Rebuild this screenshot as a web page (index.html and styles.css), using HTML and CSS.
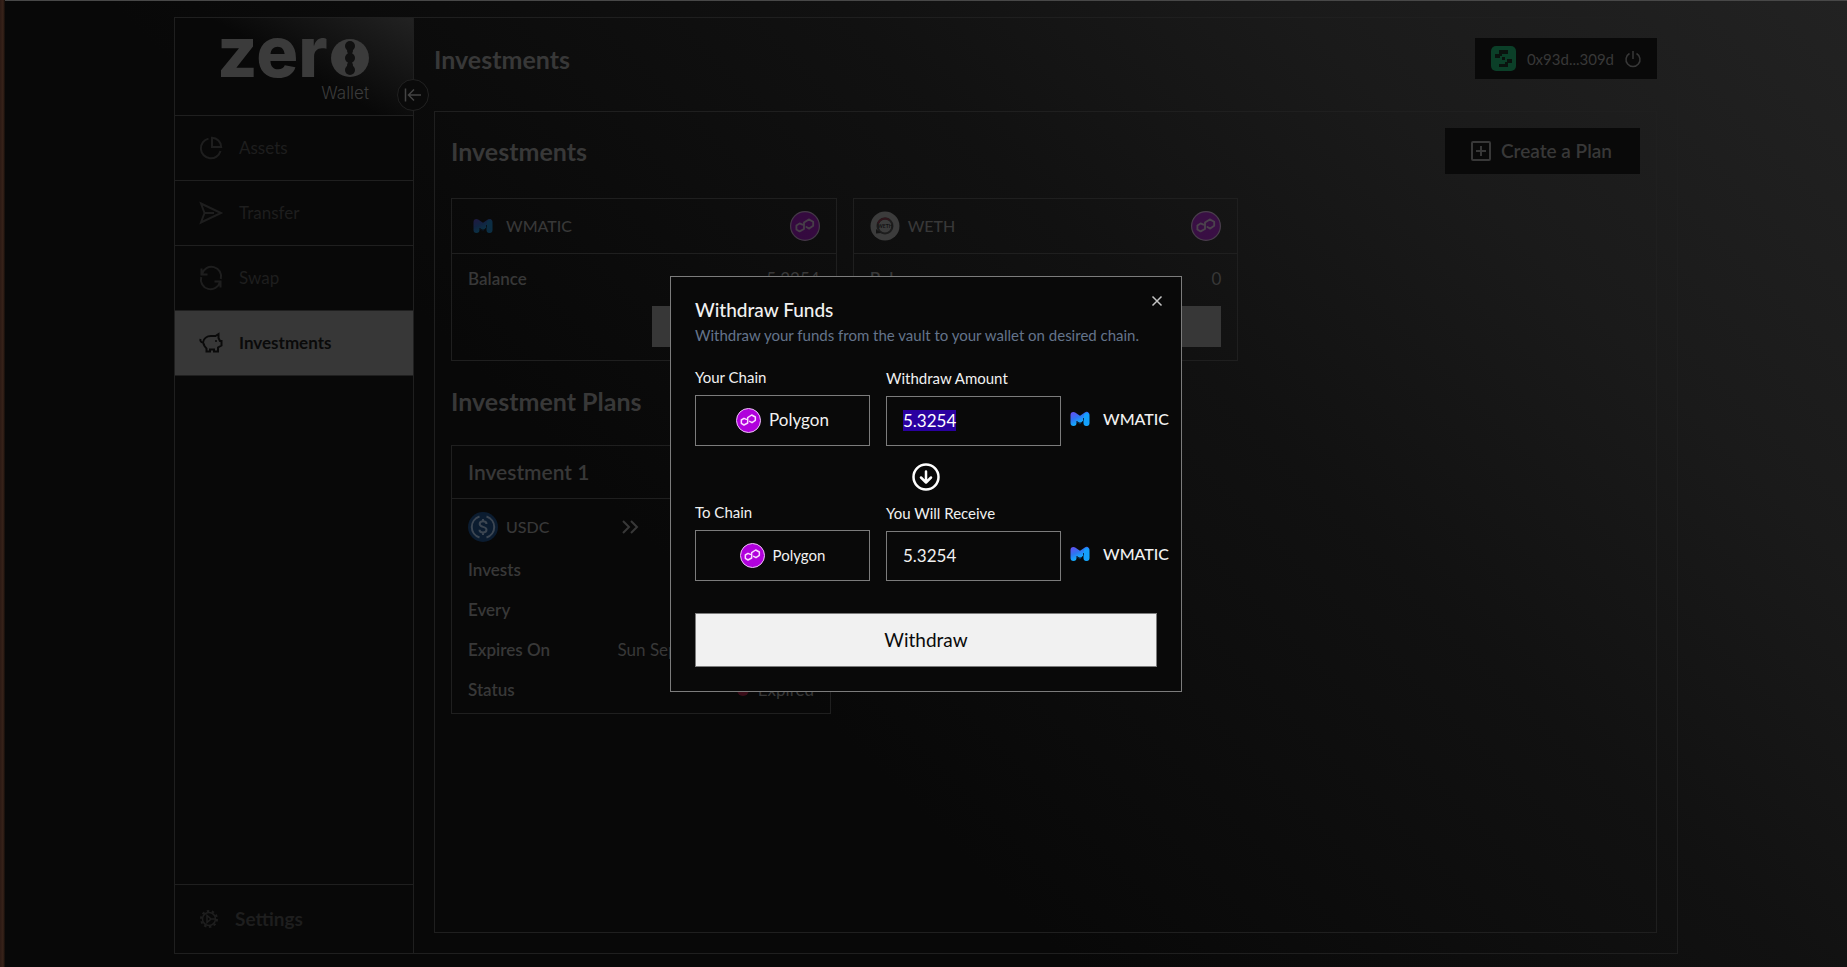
FILE: index.html
```html
<!DOCTYPE html>
<html lang="en">
<head>
<meta charset="utf-8">
<title>Zero Wallet – Investments</title>
<link rel="stylesheet" href="styles.css">
</head>
<body>
<svg class="defs" aria-hidden="true">
  <defs>
    <linearGradient id="matic-fill" gradientUnits="userSpaceOnUse" x1="8" y1="7" x2="15" y2="22">
      <stop offset="0" stop-color="#6a4cf0"/>
      <stop offset="0.45" stop-color="#2f74f2"/>
      <stop offset="0.8" stop-color="#14a9fb"/>
    </linearGradient>
    <symbol id="polygon" viewBox="0 0 75 75">
      <circle cx="37.5" cy="37.5" r="36" fill="#b000dc" stroke="#eec4f8" stroke-width="3"/>
      <path d="M31 34 24 31 16 36V46L24 51 35 45V29L47 21 58 27V37L48 44 41 40" fill="none" stroke="#fbd9ff" stroke-width="4.500" stroke-linejoin="round" stroke-linecap="round"/>
    </symbol>
    <symbol id="matic" viewBox="0 0 30 30">
      <path d="M8.500 19V11L15 15.500 21.500 11V19" fill="none" stroke="url(#matic-fill)" stroke-width="6" stroke-linejoin="round" stroke-linecap="round"/>
      <path d="M21.500 19V11.500" fill="none" stroke="#14a0fb" stroke-width="5" stroke-linecap="round"/>
      <path d="M12 18 15 20 18.500 16.500V14" fill="none" stroke="#0a2a50" stroke-width="1"/>
    </symbol>
  </defs>
</svg>
<div class="edge"></div>
<div class="page">
  <div class="app">
    <aside class="sidebar">
      <div class="brand">
        <svg class="brand-logo" viewBox="0 0 152 66" role="img" aria-label="Zero Wallet">
          <text class="brand-word" x="-1" y="41">zer</text>
          <circle cx="132" cy="22" r="19" fill="#3b3b3b"/>
          <g fill="#101010">
            <circle cx="132" cy="10" r="5"/><circle cx="132" cy="22" r="5"/><circle cx="132" cy="34" r="5"/>
            <path d="M130 10h4l1 5-1 3 2 4-2 4 1 3-1 5h-4l-1-5 1-3-2-4 2-4-1-3z"/>
          </g>
          <text class="brand-sub" x="151" y="63" text-anchor="end">Wallet</text>
        </svg>
        <button class="collapse" aria-label="Collapse sidebar">
          <svg viewBox="0 0 18 18" width="18" height="18"><path d="M1.500 2.500v13M17 9H5M10 3.500 4.500 9l5.500 5.500" class="line"/></svg>
        </button>
      </div>
      <nav class="nav">
        <a href="#assets"><svg viewBox="0 0 24 24"><path class="line" d="M9.500 2.600A10 10 0 1 0 21.500 15M13 1.800V11h9.200A9.500 9.500 0 0 0 13 1.800z"/></svg>Assets</a>
        <a href="#transfer"><svg viewBox="0 0 24 24"><path class="line" d="M2 2.500 22 12 2 21.500 5.500 12zM5.500 12H15"/></svg>Transfer</a>
        <a href="#swap"><svg viewBox="0 0 24 24"><path class="line" d="M2.500 2.500v6h6M3 8A9.700 9.700 0 0 1 21.800 13M21.500 21.500v-6h-6M21 16A9.700 9.700 0 0 1 2.200 11"/></svg>Swap</a>
        <a href="#investments" class="active"><svg viewBox="0 0 24 24"><path class="line" d="M1.500 8c-.5 2 .5 3.500 2.500 3.500C4.500 7.500 8 5 12 5h4.500L19.500 3v4l1.500 3h1.500v4.500L19 16.500V20.500h-4V18.500h-4v2H7.500V17.500L5.500 15 4 11.500"/><circle cx="17" cy="10" r="1" fill="currentColor"/></svg>Investments</a>
      </nav>
      <a href="#settings" class="settings">
        <svg viewBox="0 0 20 20"><circle cx="10" cy="10" r="6.500" class="line"/><circle cx="10" cy="10" r="8" fill="none" stroke="currentColor" stroke-width="2" stroke-dasharray="2.500 2.530"/><path class="line" d="M8 6.500v7L12 10zM12 10h5"/></svg>Settings</a>
    </aside>

    <main class="main">
      <header class="topbar">
        <h1>Investments</h1>
        <button class="wallet">
          <svg viewBox="0 0 25 25" width="25" height="25"><rect width="25" height="25" rx="5" fill="#0b3f28"/><path fill="#0a120e" d="M8 4h9v4h-6v2H9v2H4V8h4zM17 21H8v-3h6v-2h2v-3h5v4h-4zM11 11h3v3h-3z"/></svg>
          <span>0x93d...309d</span>
          <svg viewBox="0 0 16 16" width="16" height="16"><path class="line" d="M8 0v8M4.500 2.500A7 7 0 1 0 11.500 2.500"/></svg>
        </button>
      </header>

      <section class="panel">
        <div class="panel-head">
          <h2>Investments</h2>
          <button class="create"><svg viewBox="0 0 20 20" width="20" height="20"><path class="line" d="M2 1h16a1 1 0 0 1 1 1v16a1 1 0 0 1-1 1H2a1 1 0 0 1-1-1V2a1 1 0 0 1 1-1zM10 5v10M5 10h10"/></svg>Create a Plan</button>
        </div>

        <div class="vaults">
          <article class="card">
            <div class="card-head">
              <span class="token"><svg class="dim"><use href="#matic"/></svg>WMATIC</span>
              <svg class="dim"><use href="#polygon"/></svg>
            </div>
            <div class="card-body">
              <div class="row"><b>Balance</b><span>5.3254</span></div>
              <button class="vault-btn">Withdraw</button>
            </div>
          </article>
          <article class="card">
            <div class="card-head">
              <span class="token"><svg viewBox="0 0 30 30"><circle cx="15" cy="15" r="14.500" fill="#3c3c3c"/><circle cx="15" cy="15" r="7.500" fill="none" stroke="#1d1d1d" stroke-width="2"/><path d="M8 12.500A7.500 7.500 0 0 1 19.500 9" fill="none" stroke="#30161c" stroke-width="2"/><path d="M6 22.500V18l5 4z" fill="#151515"/><text class="weth-mark" x="15" y="17" text-anchor="middle">WETH</text></svg>WETH</span>
              <svg class="dim"><use href="#polygon"/></svg>
            </div>
            <div class="card-body">
              <div class="row"><b>Balance</b><span>0</span></div>
              <button class="vault-btn">Withdraw</button>
            </div>
          </article>
        </div>

        <h2 class="plans-title">Investment Plans</h2>
        <article class="card plan">
          <h3>Investment 1</h3>
          <div class="plan-body">
            <div class="row pair">
              <span class="token"><svg viewBox="0 0 30 30"><circle cx="15" cy="15" r="15" fill="#0b1c30"/><path d="M11.500 4.500a11 11 0 0 0 0 21M18.500 4.500a11 11 0 0 1 0 21M18.500 12c0-2-1.500-2.700-3.500-2.700s-3.300 1-3.300 2.700c0 4 6.800 1.800 6.800 5.700 0 1.800-1.500 2.800-3.500 2.800s-3.500-1-3.500-2.800M15 7v2.300M15 20.500v2.500" fill="none" stroke="#3c4652" stroke-width="2"/></svg>USDC</span>
              <svg class="chevrons" viewBox="0 0 16 14" width="16" height="14"><path class="line" d="M1 1l6 6-6 6M9 1l6 6-6 6"/></svg>
              <span class="token"><svg class="dim"><use href="#matic"/></svg>WMATIC</span>
            </div>
            <div class="row"><b>Invests</b><span>1 USDC</span></div>
            <div class="row"><b>Every</b><span>1 Day</span></div>
            <div class="row"><b>Expires On</b><span>Sun Sep 17 2023 1:30 PM</span></div>
            <div class="row"><b>Status</b><span class="status">Expired</span></div>
          </div>
        </article>
      </section>
    </main>
  </div>
</div>

<div class="overlay">
  <form class="modal" role="dialog" aria-labelledby="modal-title">
    <button type="button" class="close" aria-label="Close"><svg viewBox="0 0 10 10" width="10" height="10"><path class="line" d="M.5.5l9 9M9.500.5l-9 9"/></svg></button>
    <h2 id="modal-title">Withdraw Funds</h2>
    <p class="modal-desc">Withdraw your funds from the vault to your wallet on desired chain.</p>
    <div class="fields">
      <div class="field">
        <label for="from-chain">Your Chain</label>
        <button type="button" class="chain" id="from-chain"><svg><use href="#polygon"/></svg>Polygon</button>
      </div>
      <div class="field">
        <label for="amount">Withdraw Amount</label>
        <div class="amount"><input id="amount" type="text" value="5.3254"><span class="token"><svg><use href="#matic"/></svg>WMATIC</span></div>
      </div>
    </div>
    <svg class="down" viewBox="0 0 32 32"><circle cx="16" cy="16" r="12.500"/><path d="M16 10.500V21M11 16.500 16 21.500 21 16.500"/></svg>
    <div class="fields">
      <div class="field">
        <label for="to-chain">To Chain</label>
        <button type="button" class="chain small" id="to-chain"><svg><use href="#polygon"/></svg>Polygon</button>
      </div>
      <div class="field">
        <label for="receive">You Will Receive</label>
        <div class="amount"><input id="receive" type="text" value="5.3254" readonly><span class="token"><svg><use href="#matic"/></svg>WMATIC</span></div>
      </div>
    </div>
    <button type="button" class="submit">Withdraw</button>
  </form>
</div>
<script src="app.js"></script>
</body>
</html>
```
FILE: styles.css
```css
:root {
  --border: #1f1f1f;
  --dim: #383838;
  --faint: #1e1e1e;
  --ink: #0a0a0a;
  --modal-line: #7c7c7c;
  --light: #f1f1f1;
}
* { box-sizing: border-box; }
body {
  margin: 0;
  min-height: 100vh;
  display: flex;
  background: #080808;
  color: var(--dim);
  font: 17px/24px Lato, "Open Sans", sans-serif;
}
h1, h2, h3, p { margin: 0; }
button, input { font: inherit; color: inherit; border: 0; border-radius: 0; background: none; padding: 0; }
a { color: inherit; text-decoration: none; }
svg { display: block; flex: none; overflow: visible; }
.defs { position: absolute; width: 0; height: 0; }
.line { fill: none; stroke: currentColor; stroke-width: 2; }
.dim { opacity: .24; }

.edge { flex: none; width: 5px; background: linear-gradient(to right, #2c1a14, #38231a 60%, #120c08); }
.page {
  flex: 1;
  display: flex;
  justify-content: center;
  padding: 16px 16px 13px;
  border-top: 1px solid #484848;
  background: linear-gradient(45deg, #080808 38%, #111 64%, #1a1a1a 80%, #222 100%);
}
.app { display: flex; flex: 1; max-width: 1504px; border: 1px solid var(--border); }

.sidebar { flex: none; width: 239px; display: flex; flex-direction: column; border-right: 1px solid var(--border); background: #080808; }
.brand {
  position: relative;
  height: 98px;
  display: flex;
  justify-content: center;
  align-items: flex-start;
  padding-top: 18px;
  border-bottom: 1px solid var(--border);
  background: linear-gradient(30deg, #080808 50%, #222);
}
.brand-logo { width: 152px; height: 66px; }
.brand-word { font: 800 70px Inter, sans-serif; fill: #3b3b3b; }
.brand-sub { font: 300 17px Inter, sans-serif; fill: #3b3b3b; }
.collapse {
  position: absolute;
  right: -16px;
  top: 61px;
  z-index: 1;
  width: 32px;
  height: 32px;
  display: grid;
  place-items: center;
  border: 1px solid #222;
  border-radius: 50%;
  background: #0a0a0a;
  color: #444;
}
.collapse .line { stroke-width: 1.5; }
.nav { flex: 1; }
.nav a { display: flex; align-items: center; gap: 16px; height: 65px; padding-left: 24px; border-bottom: 1px solid var(--border); color: var(--faint); }
.nav svg { width: 24px; height: 24px; }
.nav a.active { background: #373737; color: var(--ink); font-weight: 700; }
.settings { display: flex; align-items: center; gap: 16px; height: 69px; padding-left: 24px; border-top: 1px solid var(--border); color: var(--faint); font-size: 19px; font-weight: 700; }
.settings svg { width: 20px; height: 20px; }
.settings .line { stroke-width: 1.5; }

.main { flex: 1; min-width: 0; display: flex; flex-direction: column; gap: 32px; padding: 20px; }
h1, h2 { font-size: 25px; line-height: 36px; font-weight: 700; }
.topbar { display: flex; justify-content: space-between; align-items: center; }
.wallet { display: flex; align-items: center; gap: 11px; height: 41px; padding: 0 16px; background: #090909; font-size: 15px; }
.wallet .line { stroke-width: 1.5; }
.panel { flex: 1; padding: 16px; border: 1px solid var(--border); }
.panel-head { display: flex; justify-content: space-between; align-items: center; margin-bottom: 24px; }
.create { display: flex; align-items: center; gap: 10px; height: 46px; padding: 0 28px 0 26px; background: #090909; font-size: 19px; font-weight: 600; }
.vaults { display: grid; grid-template-columns: repeat(3, 1fr); gap: 16px; }
.card { border: 1px solid var(--border); }
.card-head { display: flex; justify-content: space-between; align-items: center; height: 55px; padding: 0 16px; border-bottom: 1px solid var(--border); }
.card-head svg, .token svg { width: 30px; height: 30px; }
.token { display: flex; align-items: center; gap: 8px; font-size: 16px; font-weight: 500; white-space: nowrap; }
.weth-mark { font: 700 5px Lato, sans-serif; fill: #111; }
.card-body { display: flex; flex-direction: column; gap: 15px; padding: 13px 16px; }
.row { display: flex; justify-content: space-between; align-items: center; }
.row b { font-weight: 600; }
.vault-btn { align-self: flex-end; width: 168px; height: 41px; background: #373737; color: var(--ink); }
.plans-title { margin: 22px 0 26px; }
.plan { width: 380px; }
.plan h3 { padding: 14px 16px; border-bottom: 1px solid var(--border); font-size: 21px; line-height: 24px; font-weight: 600; }
.plan-body { display: flex; flex-direction: column; gap: 16px; padding: 12px 16px 11px; }
.pair { height: 31px; }
.chevrons .line { stroke-width: 2; }
.status { display: flex; align-items: center; gap: 9px; }
.status::before { content: ""; width: 12px; height: 12px; border-radius: 50%; background: #3a0c18; }

.overlay { position: fixed; inset: 0 0 0 5px; display: grid; place-items: center; }
.modal {
  position: relative;
  width: 512px;
  padding: 24px;
  display: flex;
  flex-direction: column;
  border: 1px solid var(--modal-line);
  background: #090909;
  color: var(--light);
}
.modal h2 { font-size: 19px; line-height: 18px; font-weight: 500; }
.modal-desc { margin: 6px 0 22px; font-size: 15px; line-height: 20px; color: #64748b; }
.close { position: absolute; top: 19px; right: 19px; color: #c4c4c4; }
.close .line { stroke-width: 1.5; }
.fields { display: grid; grid-template-columns: 175px 1fr; gap: 16px; align-items: end; }
.field { display: flex; flex-direction: column; gap: 8px; }
.field label { font-size: 15px; line-height: 20px; }
.chain { display: flex; justify-content: center; align-items: center; gap: 8px; height: 51px; border: 1px solid var(--modal-line); }
.chain svg { width: 25px; height: 25px; }
.chain.small { font-size: 15px; }
.amount { display: flex; gap: 4px; align-items: center; }
.amount input { flex: none; width: 175px; height: 50px; padding: 0 16px; border: 1px solid var(--modal-line); outline: 0; line-height: 24px; }
.amount input::selection { background: #2a00a0; color: #fff; }
.amount .token { padding-bottom: 4px; }
.down { align-self: center; width: 32px; height: 32px; margin: 15px 0 9px; fill: none; stroke: #fff; stroke-width: 2.5; stroke-linecap: round; stroke-linejoin: round; }
.submit { margin-top: 32px; height: 54px; border: 1px solid var(--modal-line); background: var(--light); color: #0a0a0a; font-size: 19px; }
```
FILE: app.js
```js
const amount = document.getElementById('amount');
amount.focus();
amount.select();
```
